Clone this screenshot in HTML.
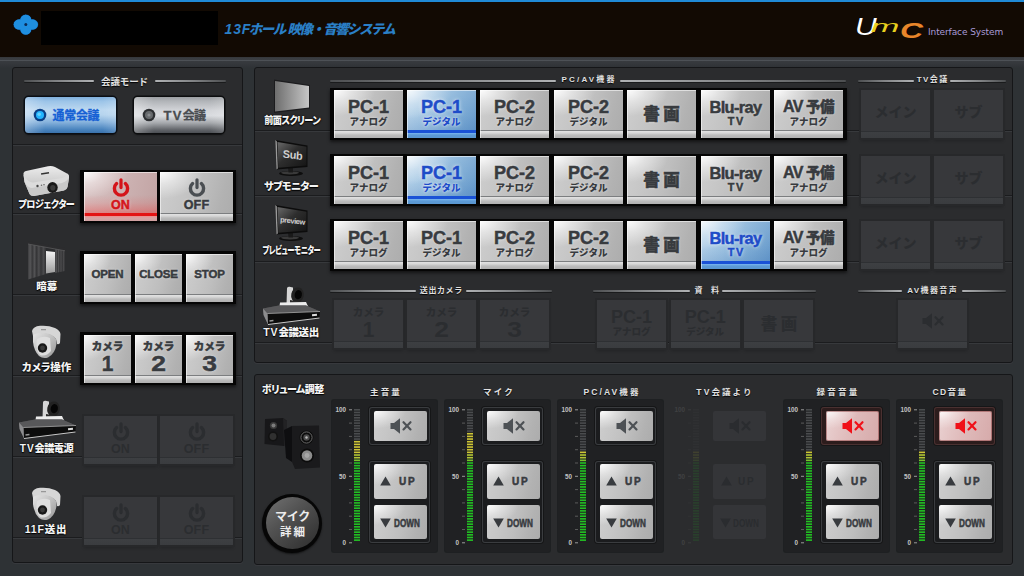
<!DOCTYPE html><html lang="ja"><head><meta charset="utf-8"><title>13Fホール 映像・音響システム</title><style>
*{margin:0;padding:0;box-sizing:border-box}
html,body{width:1024px;height:576px;overflow:hidden}
body{position:relative;background:#2e3235;font-family:"Liberation Sans","Noto Sans CJK JP",sans-serif;color:#fff}
.abs,.panel,.sub,.grp,.b,.d,.lbl,.sec,.ln,.sep,.t,.bez{position:absolute}
.hdr{position:absolute;left:0;top:0;width:1024px;height:57px;background:#120a03}
.hdr .bl{position:absolute;left:0;top:0;width:1024px;height:2px;background:#1f8ad6}
.hshade{position:absolute;left:0;top:56px;width:1024px;height:12px;background:linear-gradient(#2c2e31 0,#393c40 2px,#3b3e42 4px,#4d5156 4px,#4d5156 5px,#383b3f 5px,#34373b 8px,#2e3235 12px)}
.panel{background:#2b2c2e;border:1px solid #151618;border-radius:3px;box-shadow:0 1px 0 #37393d}
.sub{background:#202123;border-radius:2px;box-shadow:0 0 0 1px #1e2022}
.sep{height:2px;background:linear-gradient(#1b1c1e 0,#1b1c1e 1px,#37393c 1px,#37393c 2px)}
.ln{height:2px;background:linear-gradient(90deg,#4c4e50,#808284 45%,#b0b2b4);border-radius:1px;box-shadow:0 1px 0 #1a1b1c}
.sec{font-weight:700;font-size:8px;line-height:10px;letter-spacing:1.4px;text-align:center;white-space:nowrap;color:#e0e0e0;text-shadow:0 1px 1px #000}
.lbl{font-feature-settings:"palt";font-weight:900;font-size:10.5px;line-height:12px;letter-spacing:-0.6px;text-align:center;white-space:nowrap;color:#f4f4f4;text-shadow:0 1px 1px #000,0 0 2px #000}
.grp{background:#050505;box-shadow:0 2px 3px rgba(0,0,0,.55)}
.b,.fb{-webkit-text-stroke:.5px currentColor}
.b{overflow:hidden;box-shadow:inset 1px 1px 0 rgba(255,255,255,.55);text-shadow:0 0 3px rgba(255,255,255,.55);text-align:center;color:#383b3f;font-weight:700;white-space:nowrap;
 background:
 linear-gradient(to bottom,rgba(0,0,0,0) 0,rgba(0,0,0,0) calc(100% - 8px),#7c7e80 calc(100% - 8px),#7c7e80 calc(100% - 7px),#e2e2e2 calc(100% - 7px),#d6d6d6 calc(100% - 5px),#bcbcbc calc(100% - 3px),#b0b0b0 100%),
 radial-gradient(ellipse 60% 55% at 0% 0%,rgba(255,255,255,.95) 0,rgba(255,255,255,.45) 45%,rgba(255,255,255,0) 100%),
 linear-gradient(105deg,#cecece 0,#c6c6c6 30%,#bebebe 55%,#b2b2b2 80%,#acacac 100%)}
.b.blue{color:#1e4cc8;text-shadow:0 0 4px rgba(255,255,255,.7),0 0 2px rgba(255,255,255,.6);
 background:
 linear-gradient(to bottom,rgba(0,0,0,0) 0,rgba(0,0,0,0) calc(100% - 8px),#1a52d6 calc(100% - 8px),#1a52d6 calc(100% - 5px),#7ab6f0 calc(100% - 5px),#5c9ad6 calc(100% - 3px),#5a96d0 100%),
 radial-gradient(ellipse 65% 60% at 0% 0%,rgba(255,255,255,.85) 0,rgba(255,255,255,.3) 50%,rgba(255,255,255,0) 100%),
 linear-gradient(to bottom,rgba(255,255,255,.12) 0,rgba(255,255,255,0) 50%,rgba(20,80,160,.22) 100%),
 linear-gradient(100deg,#b8d4ea 0,#a0c4e2 35%,#80aed6 70%,#6a9ccc 100%)}
.b.red{color:#d4141a;
 background:
 linear-gradient(to top,rgba(0,0,0,0) 0,rgba(0,0,0,0) 8px,rgba(235,60,60,.42) 8px,rgba(235,60,60,.12) 18px,rgba(235,60,60,0) 26px),
 linear-gradient(to bottom,rgba(0,0,0,0) 0,rgba(0,0,0,0) calc(100% - 8px),#e31414 calc(100% - 8px),#e31414 calc(100% - 5px),#ee8c8c calc(100% - 5px),#d6a4a4 calc(100% - 3px),#cfa0a0 100%),
 radial-gradient(ellipse 60% 55% at 0% 0%,rgba(255,255,255,.95) 0,rgba(255,255,255,.4) 45%,rgba(255,255,255,0) 100%),
 linear-gradient(105deg,#d8c4c4 0,#cfb6b6 40%,#c8acac 70%,#c0a2a2 100%)}
.d{background:#37383b;color:#2b2d30;text-align:center;font-weight:700;white-space:nowrap;overflow:hidden;box-shadow:0 0 0 2px #27282a,0 3px 3px rgba(0,0,0,.2)}
.d:after{content:"";position:absolute;left:0;right:0;bottom:0;height:7px;background:linear-gradient(#2e3033 0,#2e3033 1px,#3d3f42 1px,#3a3c3f 100%)}
.t{left:0;right:0;text-align:center}
.m1{font-size:18px;line-height:18px;top:8px;letter-spacing:0}
.m2{font-size:9.5px;line-height:11px;top:26px;font-weight:900;letter-spacing:0;-webkit-text-stroke:0}
.bez{background:#1b1c1e;border-radius:3px;box-shadow:inset 0 0 0 1px #3a3c3f,0 0 0 1px #151617}
.fb{overflow:hidden;border-radius:2px;position:absolute;text-align:center;color:#383b3f;font-weight:700;white-space:nowrap;
 background:
 radial-gradient(ellipse 60% 60% at 0% 0%,rgba(255,255,255,.95) 0,rgba(255,255,255,.4) 50%,rgba(255,255,255,0) 100%),
 linear-gradient(105deg,#cecece 0,#c6c6c6 30%,#bebebe 55%,#b2b2b2 80%,#acacac 100%)}
.fb.red{background:
 radial-gradient(ellipse 60% 60% at 0% 0%,rgba(255,255,255,.9) 0,rgba(255,255,255,.35) 50%,rgba(255,255,255,0) 100%),
 linear-gradient(105deg,#ead2d2 0,#e0bcbc 45%,#d6aaaa 100%);box-shadow:inset 0 0 0 1px rgba(130,50,50,.45)}
.fd{position:absolute;background:#343538;border-radius:2px;color:#2a2c2f;text-align:center;font-weight:700}
svg{position:absolute;overflow:visible}
</style></head><body>
<div class="hshade"></div><div class="hdr"><div class="bl"></div>
<svg style="left:13px;top:14px" width="26" height="22" viewBox="0 0 26 22"><g fill="#1f8fe0" stroke="#0c2c58" stroke-width="1.2" paint-order="stroke"><ellipse cx="12.8" cy="6" rx="5.4" ry="5.2"/><ellipse cx="12.8" cy="15.2" rx="5.4" ry="5.2"/><ellipse cx="6.6" cy="10.6" rx="5.8" ry="5"/><ellipse cx="19" cy="10.6" rx="5.8" ry="5"/></g><g fill="#1f8fe0"><ellipse cx="12.8" cy="6" rx="5.4" ry="5.2"/><ellipse cx="12.8" cy="15.2" rx="5.4" ry="5.2"/><ellipse cx="6.6" cy="10.6" rx="5.8" ry="5"/><ellipse cx="19" cy="10.6" rx="5.8" ry="5"/></g><circle cx="12.8" cy="10.6" r="1.5" fill="#0b2a55"/></svg>
<div class="abs" style="left:41px;top:11px;width:177px;height:34px;background:#000"></div>
<div class="abs" style="left:224.5px;top:20px;font-size:13.5px;line-height:18px;font-weight:900;font-style:italic;color:#2a7fc6;letter-spacing:-1.6px;white-space:nowrap"><span style="letter-spacing:.9px;font-size:14px;margin-right:-2.5px">13F</span>ホール<span style="display:inline-block;width:3px"></span>映像・音響システム</div>
<div class="abs" style="left:855px;top:8px;width:76px;height:34px;font-style:italic;font-weight:400;white-space:nowrap;font-family:Liberation Sans,sans-serif"><span class="abs" style="left:0;top:6px;font-size:24px;line-height:26px;color:#fff;transform:scaleX(1.25);transform-origin:0 0">U</span><span class="abs" style="left:16px;top:9px;font-size:17px;line-height:20px;color:#e9d11f;transform:scaleX(2);transform-origin:0 0;font-weight:400">m</span><span class="abs" style="left:45px;top:10.5px;font-size:22px;line-height:24px;color:#e8862a;transform:scaleX(1.45);transform-origin:0 0;font-weight:700">C</span></div>
<div class="abs" style="left:928px;top:25.5px;font-family:DejaVu Sans,Liberation Sans,sans-serif;font-size:9px;line-height:12px;color:#a99bd6;white-space:nowrap;letter-spacing:-0.1px">Interface System</div>
</div>
<div class="panel" style="left:12px;top:67px;width:231px;height:496px"></div>
<div class="sep" style="left:13px;top:144px;width:229px"></div>
<div class="sep" style="left:13px;top:213px;width:229px"></div>
<div class="sep" style="left:13px;top:294px;width:229px"></div>
<div class="sep" style="left:13px;top:375px;width:229px"></div>
<div class="sep" style="left:13px;top:456px;width:229px"></div>
<div class="sep" style="left:13px;top:537px;width:229px"></div>
<div class="ln" style="left:24px;top:80px;width:70px"></div><div class="ln" style="left:155px;top:80px;width:71px;transform:scaleX(-1)"></div>
<div class="sec" style="left:94px;top:76.5px;width:61px;font-size:9.5px;letter-spacing:-.1px">会議モード</div>
<div class="abs" style="left:24px;top:96px;width:93px;height:39px;background:#111;border-radius:6px;opacity:.0"></div>
<div class="abs" style="left:25px;top:97px;width:90.5px;height:36px;border-radius:3.5px;box-shadow:0 0 0 1.5px #0a0e14,0 2px 2px rgba(0,0,0,.5);background:linear-gradient(90deg,rgba(255,255,255,.28) 0,rgba(255,255,255,0) 22%,rgba(255,255,255,0) 85%,rgba(255,255,255,.15) 100%),linear-gradient(#7fafdc 0,#9cc4e8 12%,#bcd8f0 36%,#b6d4ee 50%,#86b2dc 70%,#4a84be 90%,#3a72ac 100%)"><svg style="left:8px;top:10.7px" width="14" height="14" viewBox="0 0 14 14"><circle cx="7" cy="7" r="6.3" fill="#0b3f86"/><circle cx="7" cy="7" r="4" fill="#22b4ff"/><circle cx="6.2" cy="6.2" r="1.8" fill="#7fe0ff" opacity=".7"/></svg><div class="abs" style="left:27.5px;top:12px;font-size:12px;line-height:14px;font-weight:700;color:#1560d4;letter-spacing:-0.3px;-webkit-text-stroke:.3px #1560d4;white-space:nowrap">通常会議</div></div>
<div class="abs" style="left:134px;top:97px;width:90px;height:36px;border-radius:3.5px;box-shadow:0 0 0 1.5px #0c0d0e,0 2px 2px rgba(0,0,0,.5);background:linear-gradient(90deg,rgba(255,255,255,.28) 0,rgba(255,255,255,0) 22%,rgba(255,255,255,0) 85%,rgba(255,255,255,.15) 100%),linear-gradient(#9c9fa3 0,#b2b5b9 12%,#d4d6da 38%,#dadce0 52%,#a6a9ad 72%,#5e6166 92%,#4c4f54 100%)"><svg style="left:7.5px;top:10.7px" width="14" height="14" viewBox="0 0 14 14"><circle cx="7" cy="7" r="6.3" fill="#2e3033"/><circle cx="7" cy="7" r="4" fill="#686b6e"/><circle cx="7" cy="7" r="1.6" fill="#8a8d90"/></svg><div class="abs" style="left:29.5px;top:12px;font-size:12px;line-height:14px;font-weight:700;color:#4a4d51;letter-spacing:-0.6px;-webkit-text-stroke:.3px #4a4d51;white-space:nowrap"><span style="font-size:13px;letter-spacing:1.3px">TV</span>会議</div></div>
<div class="grp" style="left:80px;top:170px;width:156px;height:53px"></div>
<div class="b red" style="left:84px;top:172px;width:73px;height:49px"><svg style="left:27px;top:5.5px" width="20" height="20" viewBox="0 0 20 20"><path d="M5.6 5.6A6.6 6.6 0 1 0 14.4 5.6" fill="none" stroke="#d4141a" stroke-width="3.4" stroke-linecap="round"/><path d="M10 1.8V9.6" stroke="#d4141a" stroke-width="3.2" stroke-linecap="round"/></svg><div class="t abs" style="top:26px;font-size:12.5px;line-height:14px;letter-spacing:0.2px">ON</div></div>
<div class="b " style="left:160px;top:172px;width:73px;height:49px"><svg style="left:27px;top:5.5px" width="20" height="20" viewBox="0 0 20 20"><path d="M5.6 5.6A6.6 6.6 0 1 0 14.4 5.6" fill="none" stroke="#4a4e52" stroke-width="3.4" stroke-linecap="round"/><path d="M10 1.8V9.6" stroke="#4a4e52" stroke-width="3.2" stroke-linecap="round"/></svg><div class="t abs" style="top:26px;font-size:12.5px;line-height:14px;letter-spacing:0.2px">OFF</div></div>
<div class="grp" style="left:80px;top:251px;width:156px;height:53px"></div>
<div class="b" style="left:84px;top:254px;width:47px;height:48px"><div class="t abs" style="top:13px;font-size:11.5px;line-height:14px;letter-spacing:-0.2px">OPEN</div></div>
<div class="b" style="left:135px;top:254px;width:47px;height:48px"><div class="t abs" style="top:13px;font-size:11.5px;line-height:14px;letter-spacing:-0.2px">CLOSE</div></div>
<div class="b" style="left:186px;top:254px;width:47px;height:48px"><div class="t abs" style="top:13px;font-size:11.5px;line-height:14px;letter-spacing:-0.2px">STOP</div></div>
<div class="grp" style="left:80px;top:332px;width:156px;height:53px"></div>
<div class="b" style="left:84px;top:335px;width:47px;height:48px"><div class="t abs" style="top:4.5px;font-size:10.5px;line-height:12px;font-weight:900;letter-spacing:0">カメラ</div><div class="t abs" style="top:17.5px;font-size:22px;line-height:22px;transform:scaleX(.95)">1</div></div>
<div class="b" style="left:135px;top:335px;width:47px;height:48px"><div class="t abs" style="top:4.5px;font-size:10.5px;line-height:12px;font-weight:900;letter-spacing:0">カメラ</div><div class="t abs" style="top:17.5px;font-size:22px;line-height:22px;transform:scaleX(1.2)">2</div></div>
<div class="b" style="left:186px;top:335px;width:47px;height:48px"><div class="t abs" style="top:4.5px;font-size:10.5px;line-height:12px;font-weight:900;letter-spacing:0">カメラ</div><div class="t abs" style="top:17.5px;font-size:22px;line-height:22px;transform:scaleX(1.2)">3</div></div>
<div class="d" style="left:84px;top:416px;width:73px;height:48px"><svg style="left:27px;top:5.5px" width="20" height="20" viewBox="0 0 20 20"><path d="M5.6 5.6A6.6 6.6 0 1 0 14.4 5.6" fill="none" stroke="#2b2d30" stroke-width="3.4" stroke-linecap="round"/><path d="M10 1.8V9.6" stroke="#2b2d30" stroke-width="3.2" stroke-linecap="round"/></svg><div class="t abs" style="top:26px;font-size:12.5px;line-height:14px;letter-spacing:0.2px">ON</div></div>
<div class="d" style="left:160px;top:416px;width:73px;height:48px"><svg style="left:27px;top:5.5px" width="20" height="20" viewBox="0 0 20 20"><path d="M5.6 5.6A6.6 6.6 0 1 0 14.4 5.6" fill="none" stroke="#2b2d30" stroke-width="3.4" stroke-linecap="round"/><path d="M10 1.8V9.6" stroke="#2b2d30" stroke-width="3.2" stroke-linecap="round"/></svg><div class="t abs" style="top:26px;font-size:12.5px;line-height:14px;letter-spacing:0.2px">OFF</div></div>
<div class="d" style="left:84px;top:497px;width:73px;height:48px"><svg style="left:27px;top:5.5px" width="20" height="20" viewBox="0 0 20 20"><path d="M5.6 5.6A6.6 6.6 0 1 0 14.4 5.6" fill="none" stroke="#2b2d30" stroke-width="3.4" stroke-linecap="round"/><path d="M10 1.8V9.6" stroke="#2b2d30" stroke-width="3.2" stroke-linecap="round"/></svg><div class="t abs" style="top:26px;font-size:12.5px;line-height:14px;letter-spacing:0.2px">ON</div></div>
<div class="d" style="left:160px;top:497px;width:73px;height:48px"><svg style="left:27px;top:5.5px" width="20" height="20" viewBox="0 0 20 20"><path d="M5.6 5.6A6.6 6.6 0 1 0 14.4 5.6" fill="none" stroke="#2b2d30" stroke-width="3.4" stroke-linecap="round"/><path d="M10 1.8V9.6" stroke="#2b2d30" stroke-width="3.2" stroke-linecap="round"/></svg><div class="t abs" style="top:26px;font-size:12.5px;line-height:14px;letter-spacing:0.2px">OFF</div></div>
<div class="lbl" style="left:-4px;top:198px;width:100px;"><span style="display:inline-block;transform:scaleX(0.868)">プロジェクター</span></div>
<div class="lbl" style="left:-3.2px;top:280px;width:100px;"><span style="display:inline-block;transform:scaleX(1);letter-spacing:0px">暗幕</span></div>
<div class="lbl" style="left:-3.5px;top:361px;width:100px;"><span style="display:inline-block;transform:scaleX(1);letter-spacing:-0.1px">カメラ操作</span></div>
<div class="lbl" style="left:-4px;top:442px;width:100px;"><span style="display:inline-block;transform:scaleX(0.97)"><span style="letter-spacing:.9px">TV</span>会議電源</span></div>
<div class="lbl" style="left:-4px;top:523px;width:100px;"><span style="display:inline-block;transform:scaleX(1);letter-spacing:0.8px">11F送出</span></div>
<div class="panel" style="left:254px;top:67px;width:759px;height:296px"></div>
<div class="sep" style="left:255px;top:130px;width:757px"></div>
<div class="sep" style="left:255px;top:195px;width:757px"></div>
<div class="sep" style="left:255px;top:261px;width:757px"></div>
<div class="sep" style="left:255px;top:342px;width:757px"></div>
<div class="ln" style="left:330px;top:80px;width:226px"></div><div class="ln" style="left:620px;top:80px;width:226px;transform:scaleX(-1)"></div>
<div class="sec" style="left:556px;top:75px;width:64px;letter-spacing:2.2px;padding-left:2.2px">PC/AV機器</div>
<div class="ln" style="left:858px;top:80px;width:56px"></div><div class="ln" style="left:950px;top:80px;width:56px;transform:scaleX(-1)"></div>
<div class="sec" style="left:914px;top:75px;width:36px;padding-left:1.4px">TV会議</div>
<div class="grp" style="left:330px;top:88px;width:517px;height:52px"></div>
<div class="b" style="left:334px;top:90px;width:69px;height:48px"><div class="t abs m1">PC-1</div><div class="t abs m2">アナログ</div></div>
<div class="b blue" style="left:407px;top:90px;width:69px;height:48px"><div class="t abs m1">PC-1</div><div class="t abs m2">デジタル</div></div>
<div class="b" style="left:480px;top:90px;width:69px;height:48px"><div class="t abs m1">PC-2</div><div class="t abs m2">アナログ</div></div>
<div class="b" style="left:554px;top:90px;width:69px;height:48px"><div class="t abs m1">PC-2</div><div class="t abs m2">デジタル</div></div>
<div class="b" style="left:627px;top:90px;width:69px;height:48px"><div class="t abs" style="top:14.5px;font-size:16.5px;line-height:18px;font-weight:900;letter-spacing:3.5px;padding-left:3.5px">書画</div></div>
<div class="b" style="left:701px;top:90px;width:69px;height:48px"><div class="t abs m1" style="font-size:16.4px;letter-spacing:-0.65px;top:7.5px">Blu-ray</div><div class="t abs" style="top:25.5px;font-size:10.8px;line-height:11px;letter-spacing:1.8px;padding-left:1.8px">TV</div></div>
<div class="b" style="left:774px;top:90px;width:69px;height:48px"><div class="t abs m1" style="font-size:16px;letter-spacing:-0.5px;word-spacing:-1px">AV <span style="font-weight:900;font-size:14.5px">予備</span></div><div class="t abs m2">アナログ</div></div>
<div class="d" style="left:861px;top:90px;width:69px;height:48px"><div class="t abs" style="top:12.5px;font-size:14px;line-height:18px;font-weight:900">メイン</div></div>
<div class="d" style="left:934px;top:90px;width:69px;height:48px"><div class="t abs" style="top:12.5px;font-size:14px;line-height:18px;font-weight:900">サブ</div></div>
<div class="grp" style="left:330px;top:154px;width:517px;height:52px"></div>
<div class="b" style="left:334px;top:156px;width:69px;height:48px"><div class="t abs m1">PC-1</div><div class="t abs m2">アナログ</div></div>
<div class="b blue" style="left:407px;top:156px;width:69px;height:48px"><div class="t abs m1">PC-1</div><div class="t abs m2">デジタル</div></div>
<div class="b" style="left:480px;top:156px;width:69px;height:48px"><div class="t abs m1">PC-2</div><div class="t abs m2">アナログ</div></div>
<div class="b" style="left:554px;top:156px;width:69px;height:48px"><div class="t abs m1">PC-2</div><div class="t abs m2">デジタル</div></div>
<div class="b" style="left:627px;top:156px;width:69px;height:48px"><div class="t abs" style="top:14.5px;font-size:16.5px;line-height:18px;font-weight:900;letter-spacing:3.5px;padding-left:3.5px">書画</div></div>
<div class="b" style="left:701px;top:156px;width:69px;height:48px"><div class="t abs m1" style="font-size:16.4px;letter-spacing:-0.65px;top:7.5px">Blu-ray</div><div class="t abs" style="top:25.5px;font-size:10.8px;line-height:11px;letter-spacing:1.8px;padding-left:1.8px">TV</div></div>
<div class="b" style="left:774px;top:156px;width:69px;height:48px"><div class="t abs m1" style="font-size:16px;letter-spacing:-0.5px;word-spacing:-1px">AV <span style="font-weight:900;font-size:14.5px">予備</span></div><div class="t abs m2">アナログ</div></div>
<div class="d" style="left:861px;top:156px;width:69px;height:48px"><div class="t abs" style="top:12.5px;font-size:14px;line-height:18px;font-weight:900">メイン</div></div>
<div class="d" style="left:934px;top:156px;width:69px;height:48px"><div class="t abs" style="top:12.5px;font-size:14px;line-height:18px;font-weight:900">サブ</div></div>
<div class="grp" style="left:330px;top:219px;width:517px;height:52px"></div>
<div class="b" style="left:334px;top:221px;width:69px;height:48px"><div class="t abs m1">PC-1</div><div class="t abs m2">アナログ</div></div>
<div class="b" style="left:407px;top:221px;width:69px;height:48px"><div class="t abs m1">PC-1</div><div class="t abs m2">デジタル</div></div>
<div class="b" style="left:480px;top:221px;width:69px;height:48px"><div class="t abs m1">PC-2</div><div class="t abs m2">アナログ</div></div>
<div class="b" style="left:554px;top:221px;width:69px;height:48px"><div class="t abs m1">PC-2</div><div class="t abs m2">デジタル</div></div>
<div class="b" style="left:627px;top:221px;width:69px;height:48px"><div class="t abs" style="top:14.5px;font-size:16.5px;line-height:18px;font-weight:900;letter-spacing:3.5px;padding-left:3.5px">書画</div></div>
<div class="b blue" style="left:701px;top:221px;width:69px;height:48px"><div class="t abs m1" style="font-size:16.4px;letter-spacing:-0.65px;top:7.5px">Blu-ray</div><div class="t abs" style="top:25.5px;font-size:10.8px;line-height:11px;letter-spacing:1.8px;padding-left:1.8px">TV</div></div>
<div class="b" style="left:774px;top:221px;width:69px;height:48px"><div class="t abs m1" style="font-size:16px;letter-spacing:-0.5px;word-spacing:-1px">AV <span style="font-weight:900;font-size:14.5px">予備</span></div><div class="t abs m2">アナログ</div></div>
<div class="d" style="left:861px;top:221px;width:69px;height:48px"><div class="t abs" style="top:12.5px;font-size:14px;line-height:18px;font-weight:900">メイン</div></div>
<div class="d" style="left:934px;top:221px;width:69px;height:48px"><div class="t abs" style="top:12.5px;font-size:14px;line-height:18px;font-weight:900">サブ</div></div>
<div class="lbl" style="left:242px;top:114px;width:100px;"><span style="display:inline-block;transform:scaleX(0.87)">前面スクリーン</span></div>
<div class="lbl" style="left:241px;top:180px;width:100px;"><span style="display:inline-block;transform:scaleX(0.96)">サブモニター</span></div>
<div class="lbl" style="left:241.2px;top:244px;width:100px;"><span style="display:inline-block;transform:scaleX(0.7)">プレビューモニター</span></div>
<div class="lbl" style="left:241px;top:326px;width:100px;"><span style="display:inline-block;transform:scaleX(1);letter-spacing:-0.4px"><span style="letter-spacing:.9px">TV</span>会議送出</span></div>
<div class="ln" style="left:330px;top:290px;width:86px"></div><div class="ln" style="left:466px;top:290px;width:86px;transform:scaleX(-1)"></div>
<div class="sec" style="left:414px;top:285.5px;width:54px;letter-spacing:.6px;padding-left:.6px">送出カメラ</div>
<div class="ln" style="left:593px;top:290px;width:97px"></div><div class="ln" style="left:722px;top:290px;width:94px;transform:scaleX(-1)"></div>
<div class="sec" style="left:686px;top:285.6px;width:36px;letter-spacing:8.5px;padding-left:8.5px">資料</div>
<div class="ln" style="left:858px;top:290px;width:44px"></div><div class="ln" style="left:962px;top:290px;width:44px;transform:scaleX(-1)"></div>
<div class="sec" style="left:902px;top:285.6px;width:60px;padding-left:1.4px">AV機器音声</div>
<div class="d" style="left:334px;top:300px;width:69px;height:48px"><div class="t abs" style="top:5.5px;font-size:10.5px;line-height:12px;font-weight:900">カメラ</div><div class="t abs" style="top:18.5px;font-size:22px;line-height:22px;transform:scaleX(.95)">1</div></div>
<div class="d" style="left:407px;top:300px;width:69px;height:48px"><div class="t abs" style="top:5.5px;font-size:10.5px;line-height:12px;font-weight:900">カメラ</div><div class="t abs" style="top:18.5px;font-size:22px;line-height:22px;transform:scaleX(1.2)">2</div></div>
<div class="d" style="left:480px;top:300px;width:69px;height:48px"><div class="t abs" style="top:5.5px;font-size:10.5px;line-height:12px;font-weight:900">カメラ</div><div class="t abs" style="top:18.5px;font-size:22px;line-height:22px;transform:scaleX(1.2)">3</div></div>
<div class="d" style="left:597px;top:300px;width:69px;height:48px"><div class="t abs m1">PC-1</div><div class="t abs m2">アナログ</div></div>
<div class="d" style="left:670.7px;top:300px;width:69px;height:48px"><div class="t abs m1">PC-1</div><div class="t abs m2">デジタル</div></div>
<div class="d" style="left:744.4px;top:300px;width:69px;height:48px"><div class="t abs" style="top:14.5px;font-size:16.5px;line-height:18px;font-weight:900;letter-spacing:3.5px;padding-left:3.5px">書画</div></div>
<div class="d" style="left:898px;top:300px;width:69px;height:48px"><svg style="left:24px;top:13px" width="22" height="16" viewBox="0 0 22 16"><path d="M0.5 5h3.5l6-4.8v15.6l-6-4.8h-3.5z" fill="#2b2d30"/><path d="M13.5 4.2l7 7.2M20.5 4.2l-7 7.2" stroke="#2b2d30" stroke-width="2.2" stroke-linecap="round"/></svg></div>
<div class="panel" style="left:254px;top:374px;width:759px;height:191px"></div>
<div class="lbl" style="left:243px;top:383px;width:100px;"><span style="display:inline-block;transform:scaleX(0.95);letter-spacing:-0.5px">ボリューム調整</span></div>
<div class="abs" style="left:262px;top:494px;width:60px;height:59px;border-radius:50%;background:#060606;box-shadow:0 1px 2px rgba(0,0,0,.6)"></div>
<div class="abs" style="left:266px;top:497px;width:53px;height:52px;border-radius:50%;background:linear-gradient(140deg,#727272 0,#525252 40%,#2c2c2c 100%);text-align:center;color:#ececec;font-weight:700;font-size:12px;line-height:14.5px;padding-top:13px;letter-spacing:-0.3px">マイク<br><span style="letter-spacing:2px;padding-left:2px;font-size:11.5px">詳細</span></div>
<div class="sec" style="left:332px;top:387px;width:106px;font-size:8.5px;letter-spacing:2.2px;padding-left:2px">主音量</div>
<div class="sub" style="left:332px;top:400px;width:105px;height:152px"></div>
<svg style="left:354px;top:409px;" width="6" height="134" viewBox="0 0 6 134"><rect x="0" y="0.00" width="6" height="1.6" fill="#4a4c4e"/><rect x="0" y="2.66" width="6" height="1.6" fill="#4a4c4e"/><rect x="0" y="5.32" width="6" height="1.6" fill="#4a4c4e"/><rect x="0" y="7.98" width="6" height="1.6" fill="#4a4c4e"/><rect x="0" y="10.64" width="6" height="1.6" fill="#4a4c4e"/><rect x="0" y="13.30" width="6" height="1.6" fill="#4a4c4e"/><rect x="0" y="15.96" width="6" height="1.6" fill="#4a4c4e"/><rect x="0" y="18.62" width="6" height="1.6" fill="#4a4c4e"/><rect x="0" y="21.28" width="6" height="1.6" fill="#4a4c4e"/><rect x="0" y="23.94" width="6" height="1.6" fill="#4a4c4e"/><rect x="0" y="26.60" width="6" height="1.6" fill="#4a4c4e"/><rect x="0" y="29.26" width="6" height="1.6" fill="#4a4c4e"/><rect x="0" y="31.92" width="6" height="1.6" fill="#cfc636"/><rect x="0" y="34.58" width="6" height="1.6" fill="#cfc636"/><rect x="0" y="37.24" width="6" height="1.6" fill="#cfc636"/><rect x="0" y="39.90" width="6" height="1.6" fill="#cfc636"/><rect x="0" y="42.56" width="6" height="1.6" fill="#cfc636"/><rect x="0" y="45.22" width="6" height="1.6" fill="#b2c634"/><rect x="0" y="47.88" width="6" height="1.6" fill="#b2c634"/><rect x="0" y="50.54" width="6" height="1.6" fill="#78c42c"/><rect x="0" y="53.20" width="6" height="1.6" fill="#23c123"/><rect x="0" y="55.86" width="6" height="1.6" fill="#23c123"/><rect x="0" y="58.52" width="6" height="1.6" fill="#23c123"/><rect x="0" y="61.18" width="6" height="1.6" fill="#23c123"/><rect x="0" y="63.84" width="6" height="1.6" fill="#23c123"/><rect x="0" y="66.50" width="6" height="1.6" fill="#23c123"/><rect x="0" y="69.16" width="6" height="1.6" fill="#23c123"/><rect x="0" y="71.82" width="6" height="1.6" fill="#23c123"/><rect x="0" y="74.48" width="6" height="1.6" fill="#23c123"/><rect x="0" y="77.14" width="6" height="1.6" fill="#23c123"/><rect x="0" y="79.80" width="6" height="1.6" fill="#23c123"/><rect x="0" y="82.46" width="6" height="1.6" fill="#23c123"/><rect x="0" y="85.12" width="6" height="1.6" fill="#23c123"/><rect x="0" y="87.78" width="6" height="1.6" fill="#23c123"/><rect x="0" y="90.44" width="6" height="1.6" fill="#23c123"/><rect x="0" y="93.10" width="6" height="1.6" fill="#23c123"/><rect x="0" y="95.76" width="6" height="1.6" fill="#23c123"/><rect x="0" y="98.42" width="6" height="1.6" fill="#23c123"/><rect x="0" y="101.08" width="6" height="1.6" fill="#23c123"/><rect x="0" y="103.74" width="6" height="1.6" fill="#23c123"/><rect x="0" y="106.40" width="6" height="1.6" fill="#23c123"/><rect x="0" y="109.06" width="6" height="1.6" fill="#23c123"/><rect x="0" y="111.72" width="6" height="1.6" fill="#23c123"/><rect x="0" y="114.38" width="6" height="1.6" fill="#23c123"/><rect x="0" y="117.04" width="6" height="1.6" fill="#23c123"/><rect x="0" y="119.70" width="6" height="1.6" fill="#23c123"/><rect x="0" y="122.36" width="6" height="1.6" fill="#23c123"/><rect x="0" y="125.02" width="6" height="1.6" fill="#23c123"/><rect x="0" y="127.68" width="6" height="1.6" fill="#23c123"/><rect x="0" y="130.34" width="6" height="1.6" fill="#23c123"/><rect x="-5" y="0.30" width="3" height="1" fill="#9a9a9a"/><rect x="-5" y="13.60" width="3" height="1" fill="#5a5a5a"/><rect x="-5" y="26.90" width="3" height="1" fill="#5a5a5a"/><rect x="-5" y="40.20" width="3" height="1" fill="#5a5a5a"/><rect x="-5" y="53.50" width="3" height="1" fill="#5a5a5a"/><rect x="-5" y="66.80" width="3" height="1" fill="#9a9a9a"/><rect x="-5" y="80.10" width="3" height="1" fill="#5a5a5a"/><rect x="-5" y="93.40" width="3" height="1" fill="#5a5a5a"/><rect x="-5" y="106.70" width="3" height="1" fill="#5a5a5a"/><rect x="-5" y="120.00" width="3" height="1" fill="#5a5a5a"/><rect x="-5" y="133.30" width="3" height="1" fill="#9a9a9a"/><text x="-8" y="3.2" font-size="6.3" font-weight="700" fill="#c4c4c4" text-anchor="end" font-family="Liberation Sans,sans-serif">100</text><text x="-8" y="69.7" font-size="6.3" font-weight="700" fill="#c4c4c4" text-anchor="end" font-family="Liberation Sans,sans-serif">50</text><text x="-8" y="135.6" font-size="6.3" font-weight="700" fill="#c4c4c4" text-anchor="end" font-family="Liberation Sans,sans-serif">0</text></svg>
<div class="bez" style="left:369px;top:407px;width:61px;height:38px"></div>
<div class="fb" style="left:374px;top:411px;width:53px;height:30px"><svg style="left:16px;top:7px" width="22" height="16" viewBox="0 0 22 16"><path d="M0.5 5h3.5l6-4.8v15.6l-6-4.8h-3.5z" fill="#4d5155"/><path d="M13.5 4.2l7 7.2M20.5 4.2l-7 7.2" stroke="#4d5155" stroke-width="2.2" stroke-linecap="round"/></svg></div>
<div class="bez" style="left:369px;top:461px;width:61px;height:82px"></div>
<div class="fb" style="left:374px;top:464px;width:53px;height:35px"><svg style="left:6px;top:12px" width="11" height="10" viewBox="0 0 11 10"><path d="M5.5 0.5L10.8 9.5H0.2z" fill="#383b3f"/></svg><div class="abs" style="left:25px;top:11px;font-size:10px;line-height:13px;letter-spacing:1.7px">UP</div></div>
<div class="fb" style="left:374px;top:505px;width:53px;height:34px"><svg style="left:6px;top:13px" width="11" height="10" viewBox="0 0 11 10"><path d="M5.5 9.5L10.8 0.5H0.2z" fill="#383b3f"/></svg><div class="abs" style="left:20px;top:12px;font-size:10.2px;line-height:13px;letter-spacing:0;transform:scaleX(.8);transform-origin:0 50%">DOWN</div></div>
<div class="sec" style="left:445px;top:387px;width:106px;font-size:8.5px;letter-spacing:2.2px;padding-left:2px">マイク</div>
<div class="sub" style="left:445px;top:400px;width:105px;height:152px"></div>
<svg style="left:467px;top:409px;" width="6" height="134" viewBox="0 0 6 134"><rect x="0" y="0.00" width="6" height="1.6" fill="#4a4c4e"/><rect x="0" y="2.66" width="6" height="1.6" fill="#4a4c4e"/><rect x="0" y="5.32" width="6" height="1.6" fill="#4a4c4e"/><rect x="0" y="7.98" width="6" height="1.6" fill="#4a4c4e"/><rect x="0" y="10.64" width="6" height="1.6" fill="#4a4c4e"/><rect x="0" y="13.30" width="6" height="1.6" fill="#4a4c4e"/><rect x="0" y="15.96" width="6" height="1.6" fill="#4a4c4e"/><rect x="0" y="18.62" width="6" height="1.6" fill="#4a4c4e"/><rect x="0" y="21.28" width="6" height="1.6" fill="#4a4c4e"/><rect x="0" y="23.94" width="6" height="1.6" fill="#cfc636"/><rect x="0" y="26.60" width="6" height="1.6" fill="#cfc636"/><rect x="0" y="29.26" width="6" height="1.6" fill="#cfc636"/><rect x="0" y="31.92" width="6" height="1.6" fill="#cfc636"/><rect x="0" y="34.58" width="6" height="1.6" fill="#cfc636"/><rect x="0" y="37.24" width="6" height="1.6" fill="#cfc636"/><rect x="0" y="39.90" width="6" height="1.6" fill="#cfc636"/><rect x="0" y="42.56" width="6" height="1.6" fill="#cfc636"/><rect x="0" y="45.22" width="6" height="1.6" fill="#b2c634"/><rect x="0" y="47.88" width="6" height="1.6" fill="#b2c634"/><rect x="0" y="50.54" width="6" height="1.6" fill="#78c42c"/><rect x="0" y="53.20" width="6" height="1.6" fill="#23c123"/><rect x="0" y="55.86" width="6" height="1.6" fill="#23c123"/><rect x="0" y="58.52" width="6" height="1.6" fill="#23c123"/><rect x="0" y="61.18" width="6" height="1.6" fill="#23c123"/><rect x="0" y="63.84" width="6" height="1.6" fill="#23c123"/><rect x="0" y="66.50" width="6" height="1.6" fill="#23c123"/><rect x="0" y="69.16" width="6" height="1.6" fill="#23c123"/><rect x="0" y="71.82" width="6" height="1.6" fill="#23c123"/><rect x="0" y="74.48" width="6" height="1.6" fill="#23c123"/><rect x="0" y="77.14" width="6" height="1.6" fill="#23c123"/><rect x="0" y="79.80" width="6" height="1.6" fill="#23c123"/><rect x="0" y="82.46" width="6" height="1.6" fill="#23c123"/><rect x="0" y="85.12" width="6" height="1.6" fill="#23c123"/><rect x="0" y="87.78" width="6" height="1.6" fill="#23c123"/><rect x="0" y="90.44" width="6" height="1.6" fill="#23c123"/><rect x="0" y="93.10" width="6" height="1.6" fill="#23c123"/><rect x="0" y="95.76" width="6" height="1.6" fill="#23c123"/><rect x="0" y="98.42" width="6" height="1.6" fill="#23c123"/><rect x="0" y="101.08" width="6" height="1.6" fill="#23c123"/><rect x="0" y="103.74" width="6" height="1.6" fill="#23c123"/><rect x="0" y="106.40" width="6" height="1.6" fill="#23c123"/><rect x="0" y="109.06" width="6" height="1.6" fill="#23c123"/><rect x="0" y="111.72" width="6" height="1.6" fill="#23c123"/><rect x="0" y="114.38" width="6" height="1.6" fill="#23c123"/><rect x="0" y="117.04" width="6" height="1.6" fill="#23c123"/><rect x="0" y="119.70" width="6" height="1.6" fill="#23c123"/><rect x="0" y="122.36" width="6" height="1.6" fill="#23c123"/><rect x="0" y="125.02" width="6" height="1.6" fill="#23c123"/><rect x="0" y="127.68" width="6" height="1.6" fill="#23c123"/><rect x="0" y="130.34" width="6" height="1.6" fill="#23c123"/><rect x="-5" y="0.30" width="3" height="1" fill="#9a9a9a"/><rect x="-5" y="13.60" width="3" height="1" fill="#5a5a5a"/><rect x="-5" y="26.90" width="3" height="1" fill="#5a5a5a"/><rect x="-5" y="40.20" width="3" height="1" fill="#5a5a5a"/><rect x="-5" y="53.50" width="3" height="1" fill="#5a5a5a"/><rect x="-5" y="66.80" width="3" height="1" fill="#9a9a9a"/><rect x="-5" y="80.10" width="3" height="1" fill="#5a5a5a"/><rect x="-5" y="93.40" width="3" height="1" fill="#5a5a5a"/><rect x="-5" y="106.70" width="3" height="1" fill="#5a5a5a"/><rect x="-5" y="120.00" width="3" height="1" fill="#5a5a5a"/><rect x="-5" y="133.30" width="3" height="1" fill="#9a9a9a"/><text x="-8" y="3.2" font-size="6.3" font-weight="700" fill="#c4c4c4" text-anchor="end" font-family="Liberation Sans,sans-serif">100</text><text x="-8" y="69.7" font-size="6.3" font-weight="700" fill="#c4c4c4" text-anchor="end" font-family="Liberation Sans,sans-serif">50</text><text x="-8" y="135.6" font-size="6.3" font-weight="700" fill="#c4c4c4" text-anchor="end" font-family="Liberation Sans,sans-serif">0</text></svg>
<div class="bez" style="left:482px;top:407px;width:61px;height:38px"></div>
<div class="fb" style="left:487px;top:411px;width:53px;height:30px"><svg style="left:16px;top:7px" width="22" height="16" viewBox="0 0 22 16"><path d="M0.5 5h3.5l6-4.8v15.6l-6-4.8h-3.5z" fill="#4d5155"/><path d="M13.5 4.2l7 7.2M20.5 4.2l-7 7.2" stroke="#4d5155" stroke-width="2.2" stroke-linecap="round"/></svg></div>
<div class="bez" style="left:482px;top:461px;width:61px;height:82px"></div>
<div class="fb" style="left:487px;top:464px;width:53px;height:35px"><svg style="left:6px;top:12px" width="11" height="10" viewBox="0 0 11 10"><path d="M5.5 0.5L10.8 9.5H0.2z" fill="#383b3f"/></svg><div class="abs" style="left:25px;top:11px;font-size:10px;line-height:13px;letter-spacing:1.7px">UP</div></div>
<div class="fb" style="left:487px;top:505px;width:53px;height:34px"><svg style="left:6px;top:13px" width="11" height="10" viewBox="0 0 11 10"><path d="M5.5 9.5L10.8 0.5H0.2z" fill="#383b3f"/></svg><div class="abs" style="left:20px;top:12px;font-size:10.2px;line-height:13px;letter-spacing:0;transform:scaleX(.8);transform-origin:0 50%">DOWN</div></div>
<div class="sec" style="left:558px;top:387px;width:106px;font-size:8.5px;letter-spacing:2.1px;padding-left:2px">PC/AV機器</div>
<div class="sub" style="left:558px;top:400px;width:105px;height:152px"></div>
<svg style="left:580px;top:409px;" width="6" height="134" viewBox="0 0 6 134"><rect x="0" y="0.00" width="6" height="1.6" fill="#4a4c4e"/><rect x="0" y="2.66" width="6" height="1.6" fill="#4a4c4e"/><rect x="0" y="5.32" width="6" height="1.6" fill="#4a4c4e"/><rect x="0" y="7.98" width="6" height="1.6" fill="#4a4c4e"/><rect x="0" y="10.64" width="6" height="1.6" fill="#4a4c4e"/><rect x="0" y="13.30" width="6" height="1.6" fill="#4a4c4e"/><rect x="0" y="15.96" width="6" height="1.6" fill="#4a4c4e"/><rect x="0" y="18.62" width="6" height="1.6" fill="#4a4c4e"/><rect x="0" y="21.28" width="6" height="1.6" fill="#4a4c4e"/><rect x="0" y="23.94" width="6" height="1.6" fill="#4a4c4e"/><rect x="0" y="26.60" width="6" height="1.6" fill="#4a4c4e"/><rect x="0" y="29.26" width="6" height="1.6" fill="#4a4c4e"/><rect x="0" y="31.92" width="6" height="1.6" fill="#4a4c4e"/><rect x="0" y="34.58" width="6" height="1.6" fill="#4a4c4e"/><rect x="0" y="37.24" width="6" height="1.6" fill="#4a4c4e"/><rect x="0" y="39.90" width="6" height="1.6" fill="#4a4c4e"/><rect x="0" y="42.56" width="6" height="1.6" fill="#cfc636"/><rect x="0" y="45.22" width="6" height="1.6" fill="#b2c634"/><rect x="0" y="47.88" width="6" height="1.6" fill="#b2c634"/><rect x="0" y="50.54" width="6" height="1.6" fill="#78c42c"/><rect x="0" y="53.20" width="6" height="1.6" fill="#23c123"/><rect x="0" y="55.86" width="6" height="1.6" fill="#23c123"/><rect x="0" y="58.52" width="6" height="1.6" fill="#23c123"/><rect x="0" y="61.18" width="6" height="1.6" fill="#23c123"/><rect x="0" y="63.84" width="6" height="1.6" fill="#23c123"/><rect x="0" y="66.50" width="6" height="1.6" fill="#23c123"/><rect x="0" y="69.16" width="6" height="1.6" fill="#23c123"/><rect x="0" y="71.82" width="6" height="1.6" fill="#23c123"/><rect x="0" y="74.48" width="6" height="1.6" fill="#23c123"/><rect x="0" y="77.14" width="6" height="1.6" fill="#23c123"/><rect x="0" y="79.80" width="6" height="1.6" fill="#23c123"/><rect x="0" y="82.46" width="6" height="1.6" fill="#23c123"/><rect x="0" y="85.12" width="6" height="1.6" fill="#23c123"/><rect x="0" y="87.78" width="6" height="1.6" fill="#23c123"/><rect x="0" y="90.44" width="6" height="1.6" fill="#23c123"/><rect x="0" y="93.10" width="6" height="1.6" fill="#23c123"/><rect x="0" y="95.76" width="6" height="1.6" fill="#23c123"/><rect x="0" y="98.42" width="6" height="1.6" fill="#23c123"/><rect x="0" y="101.08" width="6" height="1.6" fill="#23c123"/><rect x="0" y="103.74" width="6" height="1.6" fill="#23c123"/><rect x="0" y="106.40" width="6" height="1.6" fill="#23c123"/><rect x="0" y="109.06" width="6" height="1.6" fill="#23c123"/><rect x="0" y="111.72" width="6" height="1.6" fill="#23c123"/><rect x="0" y="114.38" width="6" height="1.6" fill="#23c123"/><rect x="0" y="117.04" width="6" height="1.6" fill="#23c123"/><rect x="0" y="119.70" width="6" height="1.6" fill="#23c123"/><rect x="0" y="122.36" width="6" height="1.6" fill="#23c123"/><rect x="0" y="125.02" width="6" height="1.6" fill="#23c123"/><rect x="0" y="127.68" width="6" height="1.6" fill="#23c123"/><rect x="0" y="130.34" width="6" height="1.6" fill="#23c123"/><rect x="-5" y="0.30" width="3" height="1" fill="#9a9a9a"/><rect x="-5" y="13.60" width="3" height="1" fill="#5a5a5a"/><rect x="-5" y="26.90" width="3" height="1" fill="#5a5a5a"/><rect x="-5" y="40.20" width="3" height="1" fill="#5a5a5a"/><rect x="-5" y="53.50" width="3" height="1" fill="#5a5a5a"/><rect x="-5" y="66.80" width="3" height="1" fill="#9a9a9a"/><rect x="-5" y="80.10" width="3" height="1" fill="#5a5a5a"/><rect x="-5" y="93.40" width="3" height="1" fill="#5a5a5a"/><rect x="-5" y="106.70" width="3" height="1" fill="#5a5a5a"/><rect x="-5" y="120.00" width="3" height="1" fill="#5a5a5a"/><rect x="-5" y="133.30" width="3" height="1" fill="#9a9a9a"/><text x="-8" y="3.2" font-size="6.3" font-weight="700" fill="#c4c4c4" text-anchor="end" font-family="Liberation Sans,sans-serif">100</text><text x="-8" y="69.7" font-size="6.3" font-weight="700" fill="#c4c4c4" text-anchor="end" font-family="Liberation Sans,sans-serif">50</text><text x="-8" y="135.6" font-size="6.3" font-weight="700" fill="#c4c4c4" text-anchor="end" font-family="Liberation Sans,sans-serif">0</text></svg>
<div class="bez" style="left:595px;top:407px;width:61px;height:38px"></div>
<div class="fb" style="left:600px;top:411px;width:53px;height:30px"><svg style="left:16px;top:7px" width="22" height="16" viewBox="0 0 22 16"><path d="M0.5 5h3.5l6-4.8v15.6l-6-4.8h-3.5z" fill="#4d5155"/><path d="M13.5 4.2l7 7.2M20.5 4.2l-7 7.2" stroke="#4d5155" stroke-width="2.2" stroke-linecap="round"/></svg></div>
<div class="bez" style="left:595px;top:461px;width:61px;height:82px"></div>
<div class="fb" style="left:600px;top:464px;width:53px;height:35px"><svg style="left:6px;top:12px" width="11" height="10" viewBox="0 0 11 10"><path d="M5.5 0.5L10.8 9.5H0.2z" fill="#383b3f"/></svg><div class="abs" style="left:25px;top:11px;font-size:10px;line-height:13px;letter-spacing:1.7px">UP</div></div>
<div class="fb" style="left:600px;top:505px;width:53px;height:34px"><svg style="left:6px;top:13px" width="11" height="10" viewBox="0 0 11 10"><path d="M5.5 9.5L10.8 0.5H0.2z" fill="#383b3f"/></svg><div class="abs" style="left:20px;top:12px;font-size:10.2px;line-height:13px;letter-spacing:0;transform:scaleX(.8);transform-origin:0 50%">DOWN</div></div>
<div class="sec" style="left:671px;top:387px;width:106px;font-size:8.5px;letter-spacing:2.1px;padding-left:2px">TV会議より</div>
<svg style="left:693px;top:409px; opacity:.13;" width="6" height="134" viewBox="0 0 6 134"><rect x="0" y="0.00" width="6" height="1.6" fill="#4a4c4e"/><rect x="0" y="2.66" width="6" height="1.6" fill="#4a4c4e"/><rect x="0" y="5.32" width="6" height="1.6" fill="#4a4c4e"/><rect x="0" y="7.98" width="6" height="1.6" fill="#4a4c4e"/><rect x="0" y="10.64" width="6" height="1.6" fill="#4a4c4e"/><rect x="0" y="13.30" width="6" height="1.6" fill="#4a4c4e"/><rect x="0" y="15.96" width="6" height="1.6" fill="#4a4c4e"/><rect x="0" y="18.62" width="6" height="1.6" fill="#4a4c4e"/><rect x="0" y="21.28" width="6" height="1.6" fill="#4a4c4e"/><rect x="0" y="23.94" width="6" height="1.6" fill="#4a4c4e"/><rect x="0" y="26.60" width="6" height="1.6" fill="#4a4c4e"/><rect x="0" y="29.26" width="6" height="1.6" fill="#4a4c4e"/><rect x="0" y="31.92" width="6" height="1.6" fill="#4a4c4e"/><rect x="0" y="34.58" width="6" height="1.6" fill="#4a4c4e"/><rect x="0" y="37.24" width="6" height="1.6" fill="#4a4c4e"/><rect x="0" y="39.90" width="6" height="1.6" fill="#4a4c4e"/><rect x="0" y="42.56" width="6" height="1.6" fill="#cfc636"/><rect x="0" y="45.22" width="6" height="1.6" fill="#b2c634"/><rect x="0" y="47.88" width="6" height="1.6" fill="#b2c634"/><rect x="0" y="50.54" width="6" height="1.6" fill="#78c42c"/><rect x="0" y="53.20" width="6" height="1.6" fill="#23c123"/><rect x="0" y="55.86" width="6" height="1.6" fill="#23c123"/><rect x="0" y="58.52" width="6" height="1.6" fill="#23c123"/><rect x="0" y="61.18" width="6" height="1.6" fill="#23c123"/><rect x="0" y="63.84" width="6" height="1.6" fill="#23c123"/><rect x="0" y="66.50" width="6" height="1.6" fill="#23c123"/><rect x="0" y="69.16" width="6" height="1.6" fill="#23c123"/><rect x="0" y="71.82" width="6" height="1.6" fill="#23c123"/><rect x="0" y="74.48" width="6" height="1.6" fill="#23c123"/><rect x="0" y="77.14" width="6" height="1.6" fill="#23c123"/><rect x="0" y="79.80" width="6" height="1.6" fill="#23c123"/><rect x="0" y="82.46" width="6" height="1.6" fill="#23c123"/><rect x="0" y="85.12" width="6" height="1.6" fill="#23c123"/><rect x="0" y="87.78" width="6" height="1.6" fill="#23c123"/><rect x="0" y="90.44" width="6" height="1.6" fill="#23c123"/><rect x="0" y="93.10" width="6" height="1.6" fill="#23c123"/><rect x="0" y="95.76" width="6" height="1.6" fill="#23c123"/><rect x="0" y="98.42" width="6" height="1.6" fill="#23c123"/><rect x="0" y="101.08" width="6" height="1.6" fill="#23c123"/><rect x="0" y="103.74" width="6" height="1.6" fill="#23c123"/><rect x="0" y="106.40" width="6" height="1.6" fill="#23c123"/><rect x="0" y="109.06" width="6" height="1.6" fill="#23c123"/><rect x="0" y="111.72" width="6" height="1.6" fill="#23c123"/><rect x="0" y="114.38" width="6" height="1.6" fill="#23c123"/><rect x="0" y="117.04" width="6" height="1.6" fill="#23c123"/><rect x="0" y="119.70" width="6" height="1.6" fill="#23c123"/><rect x="0" y="122.36" width="6" height="1.6" fill="#23c123"/><rect x="0" y="125.02" width="6" height="1.6" fill="#23c123"/><rect x="0" y="127.68" width="6" height="1.6" fill="#23c123"/><rect x="0" y="130.34" width="6" height="1.6" fill="#23c123"/><rect x="-5" y="0.30" width="3" height="1" fill="#9a9a9a"/><rect x="-5" y="13.60" width="3" height="1" fill="#5a5a5a"/><rect x="-5" y="26.90" width="3" height="1" fill="#5a5a5a"/><rect x="-5" y="40.20" width="3" height="1" fill="#5a5a5a"/><rect x="-5" y="53.50" width="3" height="1" fill="#5a5a5a"/><rect x="-5" y="66.80" width="3" height="1" fill="#9a9a9a"/><rect x="-5" y="80.10" width="3" height="1" fill="#5a5a5a"/><rect x="-5" y="93.40" width="3" height="1" fill="#5a5a5a"/><rect x="-5" y="106.70" width="3" height="1" fill="#5a5a5a"/><rect x="-5" y="120.00" width="3" height="1" fill="#5a5a5a"/><rect x="-5" y="133.30" width="3" height="1" fill="#9a9a9a"/><text x="-8" y="3.2" font-size="6.3" font-weight="700" fill="#c4c4c4" text-anchor="end" font-family="Liberation Sans,sans-serif">100</text><text x="-8" y="69.7" font-size="6.3" font-weight="700" fill="#c4c4c4" text-anchor="end" font-family="Liberation Sans,sans-serif">50</text><text x="-8" y="135.6" font-size="6.3" font-weight="700" fill="#c4c4c4" text-anchor="end" font-family="Liberation Sans,sans-serif">0</text></svg>
<div class="fd" style="left:713px;top:411px;width:53px;height:30px"><svg style="left:16px;top:7px" width="22" height="16" viewBox="0 0 22 16"><path d="M0.5 5h3.5l6-4.8v15.6l-6-4.8h-3.5z" fill="#2a2c2f"/><path d="M13.5 4.2l7 7.2M20.5 4.2l-7 7.2" stroke="#2a2c2f" stroke-width="2.2" stroke-linecap="round"/></svg></div>
<div class="fd" style="left:713px;top:464px;width:53px;height:35px"><svg style="left:8px;top:12px" width="11" height="10" viewBox="0 0 11 10"><path d="M5.5 0.5L10.8 9.5H0.2z" fill="#2a2c2f"/></svg><div class="abs" style="left:25px;top:11px;font-size:10px;line-height:13px;letter-spacing:1.7px">UP</div></div>
<div class="fd" style="left:713px;top:505px;width:53px;height:34px"><svg style="left:7px;top:13px" width="11" height="10" viewBox="0 0 11 10"><path d="M5.5 9.5L10.8 0.5H0.2z" fill="#2a2c2f"/></svg><div class="abs" style="left:20px;top:12px;font-size:10.2px;line-height:13px;letter-spacing:0;transform:scaleX(.8);transform-origin:0 50%">DOWN</div></div>
<div class="sec" style="left:784px;top:387px;width:106px;font-size:8.5px;letter-spacing:2.2px;padding-left:2px">録音音量</div>
<div class="sub" style="left:784px;top:400px;width:105px;height:152px"></div>
<svg style="left:806px;top:409px;" width="6" height="134" viewBox="0 0 6 134"><rect x="0" y="0.00" width="6" height="1.6" fill="#4a4c4e"/><rect x="0" y="2.66" width="6" height="1.6" fill="#4a4c4e"/><rect x="0" y="5.32" width="6" height="1.6" fill="#4a4c4e"/><rect x="0" y="7.98" width="6" height="1.6" fill="#4a4c4e"/><rect x="0" y="10.64" width="6" height="1.6" fill="#4a4c4e"/><rect x="0" y="13.30" width="6" height="1.6" fill="#4a4c4e"/><rect x="0" y="15.96" width="6" height="1.6" fill="#4a4c4e"/><rect x="0" y="18.62" width="6" height="1.6" fill="#4a4c4e"/><rect x="0" y="21.28" width="6" height="1.6" fill="#4a4c4e"/><rect x="0" y="23.94" width="6" height="1.6" fill="#4a4c4e"/><rect x="0" y="26.60" width="6" height="1.6" fill="#4a4c4e"/><rect x="0" y="29.26" width="6" height="1.6" fill="#4a4c4e"/><rect x="0" y="31.92" width="6" height="1.6" fill="#4a4c4e"/><rect x="0" y="34.58" width="6" height="1.6" fill="#4a4c4e"/><rect x="0" y="37.24" width="6" height="1.6" fill="#4a4c4e"/><rect x="0" y="39.90" width="6" height="1.6" fill="#4a4c4e"/><rect x="0" y="42.56" width="6" height="1.6" fill="#cfc636"/><rect x="0" y="45.22" width="6" height="1.6" fill="#b2c634"/><rect x="0" y="47.88" width="6" height="1.6" fill="#b2c634"/><rect x="0" y="50.54" width="6" height="1.6" fill="#78c42c"/><rect x="0" y="53.20" width="6" height="1.6" fill="#23c123"/><rect x="0" y="55.86" width="6" height="1.6" fill="#23c123"/><rect x="0" y="58.52" width="6" height="1.6" fill="#23c123"/><rect x="0" y="61.18" width="6" height="1.6" fill="#23c123"/><rect x="0" y="63.84" width="6" height="1.6" fill="#23c123"/><rect x="0" y="66.50" width="6" height="1.6" fill="#23c123"/><rect x="0" y="69.16" width="6" height="1.6" fill="#23c123"/><rect x="0" y="71.82" width="6" height="1.6" fill="#23c123"/><rect x="0" y="74.48" width="6" height="1.6" fill="#23c123"/><rect x="0" y="77.14" width="6" height="1.6" fill="#23c123"/><rect x="0" y="79.80" width="6" height="1.6" fill="#23c123"/><rect x="0" y="82.46" width="6" height="1.6" fill="#23c123"/><rect x="0" y="85.12" width="6" height="1.6" fill="#23c123"/><rect x="0" y="87.78" width="6" height="1.6" fill="#23c123"/><rect x="0" y="90.44" width="6" height="1.6" fill="#23c123"/><rect x="0" y="93.10" width="6" height="1.6" fill="#23c123"/><rect x="0" y="95.76" width="6" height="1.6" fill="#23c123"/><rect x="0" y="98.42" width="6" height="1.6" fill="#23c123"/><rect x="0" y="101.08" width="6" height="1.6" fill="#23c123"/><rect x="0" y="103.74" width="6" height="1.6" fill="#23c123"/><rect x="0" y="106.40" width="6" height="1.6" fill="#23c123"/><rect x="0" y="109.06" width="6" height="1.6" fill="#23c123"/><rect x="0" y="111.72" width="6" height="1.6" fill="#23c123"/><rect x="0" y="114.38" width="6" height="1.6" fill="#23c123"/><rect x="0" y="117.04" width="6" height="1.6" fill="#23c123"/><rect x="0" y="119.70" width="6" height="1.6" fill="#23c123"/><rect x="0" y="122.36" width="6" height="1.6" fill="#23c123"/><rect x="0" y="125.02" width="6" height="1.6" fill="#23c123"/><rect x="0" y="127.68" width="6" height="1.6" fill="#23c123"/><rect x="0" y="130.34" width="6" height="1.6" fill="#23c123"/><rect x="-5" y="0.30" width="3" height="1" fill="#9a9a9a"/><rect x="-5" y="13.60" width="3" height="1" fill="#5a5a5a"/><rect x="-5" y="26.90" width="3" height="1" fill="#5a5a5a"/><rect x="-5" y="40.20" width="3" height="1" fill="#5a5a5a"/><rect x="-5" y="53.50" width="3" height="1" fill="#5a5a5a"/><rect x="-5" y="66.80" width="3" height="1" fill="#9a9a9a"/><rect x="-5" y="80.10" width="3" height="1" fill="#5a5a5a"/><rect x="-5" y="93.40" width="3" height="1" fill="#5a5a5a"/><rect x="-5" y="106.70" width="3" height="1" fill="#5a5a5a"/><rect x="-5" y="120.00" width="3" height="1" fill="#5a5a5a"/><rect x="-5" y="133.30" width="3" height="1" fill="#9a9a9a"/><text x="-8" y="3.2" font-size="6.3" font-weight="700" fill="#c4c4c4" text-anchor="end" font-family="Liberation Sans,sans-serif">100</text><text x="-8" y="69.7" font-size="6.3" font-weight="700" fill="#c4c4c4" text-anchor="end" font-family="Liberation Sans,sans-serif">50</text><text x="-8" y="135.6" font-size="6.3" font-weight="700" fill="#c4c4c4" text-anchor="end" font-family="Liberation Sans,sans-serif">0</text></svg>
<div class="bez" style="left:821px;top:407px;width:61px;height:38px;background:#2c1c1c;box-shadow:inset 0 0 0 1px #4a3030,0 0 0 1px #151617"></div>
<div class="fb red" style="left:826px;top:411px;width:53px;height:30px"><svg style="left:16px;top:7px" width="22" height="16" viewBox="0 0 22 16"><path d="M0.5 5h3.5l6-4.8v15.6l-6-4.8h-3.5z" fill="#f01018"/><path d="M13.5 4.2l7 7.2M20.5 4.2l-7 7.2" stroke="#f01018" stroke-width="2.2" stroke-linecap="round"/></svg></div>
<div class="bez" style="left:821px;top:461px;width:61px;height:82px"></div>
<div class="fb" style="left:826px;top:464px;width:53px;height:35px"><svg style="left:6px;top:12px" width="11" height="10" viewBox="0 0 11 10"><path d="M5.5 0.5L10.8 9.5H0.2z" fill="#383b3f"/></svg><div class="abs" style="left:25px;top:11px;font-size:10px;line-height:13px;letter-spacing:1.7px">UP</div></div>
<div class="fb" style="left:826px;top:505px;width:53px;height:34px"><svg style="left:6px;top:13px" width="11" height="10" viewBox="0 0 11 10"><path d="M5.5 9.5L10.8 0.5H0.2z" fill="#383b3f"/></svg><div class="abs" style="left:20px;top:12px;font-size:10.2px;line-height:13px;letter-spacing:0;transform:scaleX(.8);transform-origin:0 50%">DOWN</div></div>
<div class="sec" style="left:897px;top:387px;width:106px;font-size:8.5px;letter-spacing:1.4px">CD音量</div>
<div class="sub" style="left:897px;top:400px;width:105px;height:152px"></div>
<svg style="left:919px;top:409px;" width="6" height="134" viewBox="0 0 6 134"><rect x="0" y="0.00" width="6" height="1.6" fill="#4a4c4e"/><rect x="0" y="2.66" width="6" height="1.6" fill="#4a4c4e"/><rect x="0" y="5.32" width="6" height="1.6" fill="#4a4c4e"/><rect x="0" y="7.98" width="6" height="1.6" fill="#4a4c4e"/><rect x="0" y="10.64" width="6" height="1.6" fill="#4a4c4e"/><rect x="0" y="13.30" width="6" height="1.6" fill="#4a4c4e"/><rect x="0" y="15.96" width="6" height="1.6" fill="#4a4c4e"/><rect x="0" y="18.62" width="6" height="1.6" fill="#4a4c4e"/><rect x="0" y="21.28" width="6" height="1.6" fill="#4a4c4e"/><rect x="0" y="23.94" width="6" height="1.6" fill="#4a4c4e"/><rect x="0" y="26.60" width="6" height="1.6" fill="#4a4c4e"/><rect x="0" y="29.26" width="6" height="1.6" fill="#4a4c4e"/><rect x="0" y="31.92" width="6" height="1.6" fill="#4a4c4e"/><rect x="0" y="34.58" width="6" height="1.6" fill="#4a4c4e"/><rect x="0" y="37.24" width="6" height="1.6" fill="#4a4c4e"/><rect x="0" y="39.90" width="6" height="1.6" fill="#4a4c4e"/><rect x="0" y="42.56" width="6" height="1.6" fill="#cfc636"/><rect x="0" y="45.22" width="6" height="1.6" fill="#b2c634"/><rect x="0" y="47.88" width="6" height="1.6" fill="#b2c634"/><rect x="0" y="50.54" width="6" height="1.6" fill="#78c42c"/><rect x="0" y="53.20" width="6" height="1.6" fill="#23c123"/><rect x="0" y="55.86" width="6" height="1.6" fill="#23c123"/><rect x="0" y="58.52" width="6" height="1.6" fill="#23c123"/><rect x="0" y="61.18" width="6" height="1.6" fill="#23c123"/><rect x="0" y="63.84" width="6" height="1.6" fill="#23c123"/><rect x="0" y="66.50" width="6" height="1.6" fill="#23c123"/><rect x="0" y="69.16" width="6" height="1.6" fill="#23c123"/><rect x="0" y="71.82" width="6" height="1.6" fill="#23c123"/><rect x="0" y="74.48" width="6" height="1.6" fill="#23c123"/><rect x="0" y="77.14" width="6" height="1.6" fill="#23c123"/><rect x="0" y="79.80" width="6" height="1.6" fill="#23c123"/><rect x="0" y="82.46" width="6" height="1.6" fill="#23c123"/><rect x="0" y="85.12" width="6" height="1.6" fill="#23c123"/><rect x="0" y="87.78" width="6" height="1.6" fill="#23c123"/><rect x="0" y="90.44" width="6" height="1.6" fill="#23c123"/><rect x="0" y="93.10" width="6" height="1.6" fill="#23c123"/><rect x="0" y="95.76" width="6" height="1.6" fill="#23c123"/><rect x="0" y="98.42" width="6" height="1.6" fill="#23c123"/><rect x="0" y="101.08" width="6" height="1.6" fill="#23c123"/><rect x="0" y="103.74" width="6" height="1.6" fill="#23c123"/><rect x="0" y="106.40" width="6" height="1.6" fill="#23c123"/><rect x="0" y="109.06" width="6" height="1.6" fill="#23c123"/><rect x="0" y="111.72" width="6" height="1.6" fill="#23c123"/><rect x="0" y="114.38" width="6" height="1.6" fill="#23c123"/><rect x="0" y="117.04" width="6" height="1.6" fill="#23c123"/><rect x="0" y="119.70" width="6" height="1.6" fill="#23c123"/><rect x="0" y="122.36" width="6" height="1.6" fill="#23c123"/><rect x="0" y="125.02" width="6" height="1.6" fill="#23c123"/><rect x="0" y="127.68" width="6" height="1.6" fill="#23c123"/><rect x="0" y="130.34" width="6" height="1.6" fill="#23c123"/><rect x="-5" y="0.30" width="3" height="1" fill="#9a9a9a"/><rect x="-5" y="13.60" width="3" height="1" fill="#5a5a5a"/><rect x="-5" y="26.90" width="3" height="1" fill="#5a5a5a"/><rect x="-5" y="40.20" width="3" height="1" fill="#5a5a5a"/><rect x="-5" y="53.50" width="3" height="1" fill="#5a5a5a"/><rect x="-5" y="66.80" width="3" height="1" fill="#9a9a9a"/><rect x="-5" y="80.10" width="3" height="1" fill="#5a5a5a"/><rect x="-5" y="93.40" width="3" height="1" fill="#5a5a5a"/><rect x="-5" y="106.70" width="3" height="1" fill="#5a5a5a"/><rect x="-5" y="120.00" width="3" height="1" fill="#5a5a5a"/><rect x="-5" y="133.30" width="3" height="1" fill="#9a9a9a"/><text x="-8" y="3.2" font-size="6.3" font-weight="700" fill="#c4c4c4" text-anchor="end" font-family="Liberation Sans,sans-serif">100</text><text x="-8" y="69.7" font-size="6.3" font-weight="700" fill="#c4c4c4" text-anchor="end" font-family="Liberation Sans,sans-serif">50</text><text x="-8" y="135.6" font-size="6.3" font-weight="700" fill="#c4c4c4" text-anchor="end" font-family="Liberation Sans,sans-serif">0</text></svg>
<div class="bez" style="left:934px;top:407px;width:61px;height:38px;background:#2c1c1c;box-shadow:inset 0 0 0 1px #4a3030,0 0 0 1px #151617"></div>
<div class="fb red" style="left:939px;top:411px;width:53px;height:30px"><svg style="left:16px;top:7px" width="22" height="16" viewBox="0 0 22 16"><path d="M0.5 5h3.5l6-4.8v15.6l-6-4.8h-3.5z" fill="#f01018"/><path d="M13.5 4.2l7 7.2M20.5 4.2l-7 7.2" stroke="#f01018" stroke-width="2.2" stroke-linecap="round"/></svg></div>
<div class="bez" style="left:934px;top:461px;width:61px;height:82px"></div>
<div class="fb" style="left:939px;top:464px;width:53px;height:35px"><svg style="left:6px;top:12px" width="11" height="10" viewBox="0 0 11 10"><path d="M5.5 0.5L10.8 9.5H0.2z" fill="#383b3f"/></svg><div class="abs" style="left:25px;top:11px;font-size:10px;line-height:13px;letter-spacing:1.7px">UP</div></div>
<div class="fb" style="left:939px;top:505px;width:53px;height:34px"><svg style="left:6px;top:13px" width="11" height="10" viewBox="0 0 11 10"><path d="M5.5 9.5L10.8 0.5H0.2z" fill="#383b3f"/></svg><div class="abs" style="left:20px;top:12px;font-size:10.2px;line-height:13px;letter-spacing:0;transform:scaleX(.8);transform-origin:0 50%">DOWN</div></div>
<svg width="0" height="0" style="left:0;top:0"><defs><linearGradient id="gScr" x1="0" y1="0" x2="1" y2="0"><stop offset="0" stop-color="#6e6e6e"/><stop offset=".5" stop-color="#9a9a9a"/><stop offset="1" stop-color="#c6c6c6"/></linearGradient><linearGradient id="gMon" x1="0" y1="0" x2="1" y2="1"><stop offset="0" stop-color="#6a6a6a"/><stop offset=".45" stop-color="#2e2e2e"/><stop offset="1" stop-color="#141414"/></linearGradient><linearGradient id="gPrj" x1="0" y1="0" x2="0" y2="1"><stop offset="0" stop-color="#ececec"/><stop offset="1" stop-color="#b4b4b4"/></linearGradient><linearGradient id="gCam" x1="0" y1="0" x2="1" y2="1"><stop offset="0" stop-color="#e6e6e6"/><stop offset="1" stop-color="#989898"/></linearGradient><linearGradient id="gBox" x1="0" y1="0" x2="0" y2="1"><stop offset="0" stop-color="#5a5a5c"/><stop offset="1" stop-color="#2a2a2c"/></linearGradient><linearGradient id="gCur" x1="0" y1="0" x2="1" y2="0"><stop offset="0" stop-color="#3c3c3e"/><stop offset=".12" stop-color="#565658"/><stop offset=".24" stop-color="#38383a"/><stop offset=".36" stop-color="#525254"/><stop offset=".48" stop-color="#343436"/><stop offset=".6" stop-color="#4e4e50"/><stop offset=".72" stop-color="#343436"/><stop offset=".86" stop-color="#4a4a4c"/><stop offset="1" stop-color="#303032"/></linearGradient><linearGradient id="gWin" x1="0" y1="0" x2="0" y2="1"><stop offset="0" stop-color="#f4f4f4"/><stop offset="1" stop-color="#9c9c9c"/></linearGradient></defs></svg>
<svg style="left:22px;top:165px" width="48" height="32" viewBox="0 0 48 32"><path d="M1.5 9.5Q1 7 4 6L26 1.2Q30 .5 33 2L45 8.5Q47.5 10 47 13L45.5 22Q45 24.5 42 25.5L12 31Q9 31.5 7.5 29L2.5 17Z" fill="url(#gPrj)"/><path d="M2.5 17L7.5 29Q9 31.5 12 31L42 25.5Q45 24.5 45.5 22L47 13Q44 17 40 18L10 23Q6 23 2.5 17Z" fill="#c9c9c9"/><path d="M1.5 9.5L2.5 17Q6 23 10 23L40 18Q44 17 47 13Q47.5 10 45 8.5Q44 12 40 13L11 17.5Q6 17.5 1.5 9.5Z" fill="#dcdcdc"/><ellipse cx="30.5" cy="22.5" rx="5.2" ry="5.4" fill="#1a1a1a"/><ellipse cx="30.8" cy="22.7" rx="2.6" ry="2.8" fill="#3c3c3c"/><rect x="19" y="7.5" width="8" height="1.6" fill="#333" transform="rotate(-9 23 8)"/><circle cx="15.5" cy="21" r="1.2" fill="#444"/><circle cx="19.5" cy="20.2" r=".8" fill="#666"/><circle cx="22" cy="19.7" r=".8" fill="#666"/></svg>
<svg style="left:27px;top:241px" width="39" height="39" viewBox="0 0 39 39"><path d="M0 0L38 7V9L0 3Z" fill="#2c2c2e"/><path d="M1 3L19 6.3V33L1 38.5Z" fill="url(#gCur)"/><path d="M28 8L38 9.8V30L28 32Z" fill="url(#gCur)"/><path d="M19 10L28 11V31L19 32.5Z" fill="url(#gWin)"/><path d="M1 3L38 9.8" stroke="#5a5a5c" stroke-width=".8"/></svg>
<svg style="left:31px;top:325px" width="31" height="34" viewBox="0 0 31 34"><path d="M1 6Q2 1.5 9 .8Q17 0 24 3Q29 5.5 29.5 9L29 18Q28.5 19.5 26 19L25 14Q20 8 9 9Q4 9.5 2 11Z" fill="#d6d6d6"/><path d="M2 10Q6 7.5 14 8Q22 9 25 14L25.5 19Q24 29 17 32.5Q12 34 8 31Q3 26 2 17Z" fill="url(#gCam)"/><path d="M6 14Q12 10 19 13L20 26Q15 32 9 30Q5 26 5.5 18Z" fill="#dedede"/><circle cx="11.5" cy="23" r="4.7" fill="#181818"/><circle cx="11.5" cy="23" r="2.4" fill="#3a3a3a"/><rect x="10" y="4.2" width="5" height="1" fill="#888"/></svg>
<svg style="left:31px;top:487px" width="31" height="34" viewBox="0 0 31 34"><path d="M1 6Q2 1.5 9 .8Q17 0 24 3Q29 5.5 29.5 9L29 18Q28.5 19.5 26 19L25 14Q20 8 9 9Q4 9.5 2 11Z" fill="#d6d6d6"/><path d="M2 10Q6 7.5 14 8Q22 9 25 14L25.5 19Q24 29 17 32.5Q12 34 8 31Q3 26 2 17Z" fill="url(#gCam)"/><path d="M6 14Q12 10 19 13L20 26Q15 32 9 30Q5 26 5.5 18Z" fill="#dedede"/><circle cx="11.5" cy="23" r="4.7" fill="#181818"/><circle cx="11.5" cy="23" r="2.4" fill="#3a3a3a"/><rect x="10" y="4.2" width="5" height="1" fill="#888"/></svg>
<svg style="left:18px;top:400px" width="59" height="39" viewBox="0 0 59 39"><path d="M25 2.5Q25 .5 27.5 .8L31 1.5V18L24.5 19Z" fill="#d6d6d6"/><ellipse cx="35.5" cy="9" rx="6.3" ry="7.6" fill="#222" transform="rotate(12 35.5 9)"/><ellipse cx="36.2" cy="8.6" rx="3.6" ry="4.6" fill="#050505" transform="rotate(12 36 9)"/><path d="M28 14L39 16V20L28 19Z" fill="#2a2a2a"/><path d="M18 16.5L44 16L47 22.5L17 23.5Z" fill="#ececec"/><path d="M17 23.5L47 22.5V24L17 25Z" fill="#9a9a9a"/><path d="M1 22.5L17 19.5H44L58 25.5L57.5 30L6 38.5L1.5 28Z" fill="#4a4a4c"/><path d="M1 22.5L5.5 27.5L58 25.5L44 19.5H17Z" fill="#58585a"/><path d="M5.5 27.5L58 25.5L57.5 32L6 38.5Z" fill="#0c0c0c"/><path d="M1 22.5L5.5 27.5L6 38.5L1.5 29Z" fill="#8c8c8e"/><path d="M6 38.5L57.5 32" stroke="#c8c8c8" stroke-width="1"/><path d="M5.5 27.5L58 25.5" stroke="#aaa" stroke-width=".8"/><rect x="50" y="28" width="5" height="2" fill="#ddd" transform="rotate(-6 52 29)"/><rect x="7.5" y="34" width="4" height="1.6" fill="#999" transform="rotate(-8 9 35)"/></svg>
<svg style="left:262px;top:286px" width="59" height="39" viewBox="0 0 59 39"><path d="M25 2.5Q25 .5 27.5 .8L31 1.5V18L24.5 19Z" fill="#d6d6d6"/><ellipse cx="35.5" cy="9" rx="6.3" ry="7.6" fill="#222" transform="rotate(12 35.5 9)"/><ellipse cx="36.2" cy="8.6" rx="3.6" ry="4.6" fill="#050505" transform="rotate(12 36 9)"/><path d="M28 14L39 16V20L28 19Z" fill="#2a2a2a"/><path d="M18 16.5L44 16L47 22.5L17 23.5Z" fill="#ececec"/><path d="M17 23.5L47 22.5V24L17 25Z" fill="#9a9a9a"/><path d="M1 22.5L17 19.5H44L58 25.5L57.5 30L6 38.5L1.5 28Z" fill="#4a4a4c"/><path d="M1 22.5L5.5 27.5L58 25.5L44 19.5H17Z" fill="#58585a"/><path d="M5.5 27.5L58 25.5L57.5 32L6 38.5Z" fill="#0c0c0c"/><path d="M1 22.5L5.5 27.5L6 38.5L1.5 29Z" fill="#8c8c8e"/><path d="M6 38.5L57.5 32" stroke="#c8c8c8" stroke-width="1"/><path d="M5.5 27.5L58 25.5" stroke="#aaa" stroke-width=".8"/><rect x="50" y="28" width="5" height="2" fill="#ddd" transform="rotate(-6 52 29)"/><rect x="7.5" y="34" width="4" height="1.6" fill="#999" transform="rotate(-8 9 35)"/></svg>
<svg style="left:273px;top:79px" width="38" height="35" viewBox="0 0 38 35"><path d="M1 0.5L37 6V29.5L1 34Z" fill="#1c1c1e"/><path d="M2 2L36 7V28.5L2 32.5Z" fill="url(#gScr)"/></svg>
<svg style="left:275px;top:140px" width="34" height="38" viewBox="0 0 34 38"><ellipse cx="16" cy="33.5" rx="12" ry="2.6" fill="#0e0e0e"/><ellipse cx="15" cy="32.8" rx="9" ry="1.6" fill="#3a3a3a"/><path d="M13 27L18 26.5V32.5H13.5Z" fill="#1a1a1a"/><path d="M.3 0L32.5 5.5V27L1.5 29.5Z" fill="#0c0c0c"/><path d="M.3 0L1.8 1.2L2.8 28.6L1.5 29.5Z" fill="#9a9a9a"/><path d="M2.5 2L31.5 6.7V25.6L3.3 27.7Z" fill="url(#gMon)"/><text x="17.5" y="17.8" text-anchor="middle" font-family="Liberation Sans,sans-serif" font-weight="700" font-size="11" letter-spacing="-0.3" fill="#cfcfcf" transform="rotate(4 17 16) skewY(3)">Sub</text></svg>
<svg style="left:275px;top:205px" width="34" height="38" viewBox="0 0 34 38"><ellipse cx="16" cy="33.5" rx="12" ry="2.6" fill="#0e0e0e"/><ellipse cx="15" cy="32.8" rx="9" ry="1.6" fill="#3a3a3a"/><path d="M13 27L18 26.5V32.5H13.5Z" fill="#1a1a1a"/><path d="M.3 0L32.5 5.5V27L1.5 29.5Z" fill="#0c0c0c"/><path d="M.3 0L1.8 1.2L2.8 28.6L1.5 29.5Z" fill="#9a9a9a"/><path d="M2.5 2L31.5 6.7V25.6L3.3 27.7Z" fill="url(#gMon)"/><text x="17.5" y="17.5" text-anchor="middle" font-family="Liberation Sans,sans-serif" font-weight="700" font-size="7.6" letter-spacing="-0.5" fill="#cfcfcf" transform="rotate(4 17 16) skewY(3)">preview</text></svg>
<svg style="left:263px;top:417px" width="58" height="53" viewBox="0 0 58 53"><path d="M2 2L20 1L24 4V25L21 29L1.5 27Z" fill="#171719"/><path d="M20 1L24 4V25L21 29Z" fill="#222224"/><circle cx="10.5" cy="8.5" r="3.6" fill="#3a3a3a"/><circle cx="10.5" cy="8.5" r="2" fill="#7c7c7c"/><circle cx="10" cy="19.5" r="5" fill="#121212"/><circle cx="10" cy="19.5" r="3.4" fill="#303030"/><path d="M21 13L29 9V45L23 41Z" fill="#0e0e10"/><path d="M29 9L56 8.5L57 50.5L32 52L29 45Z" fill="#1a1a1c"/><circle cx="43.5" cy="20.5" r="7" fill="#0c0c0c"/><circle cx="43.5" cy="20.5" r="5.6" fill="none" stroke="#6a6a6a" stroke-width="1"/><circle cx="43.5" cy="20.5" r="3.2" fill="#4a4a4a"/><circle cx="43.5" cy="20.5" r="1.2" fill="#bbb"/><circle cx="44" cy="38.5" r="7" fill="#0c0c0c"/><circle cx="44" cy="38.5" r="5.3" fill="#8c8c8c"/><circle cx="44" cy="38.5" r="2.4" fill="#a6a6a6"/></svg>
</body></html>
